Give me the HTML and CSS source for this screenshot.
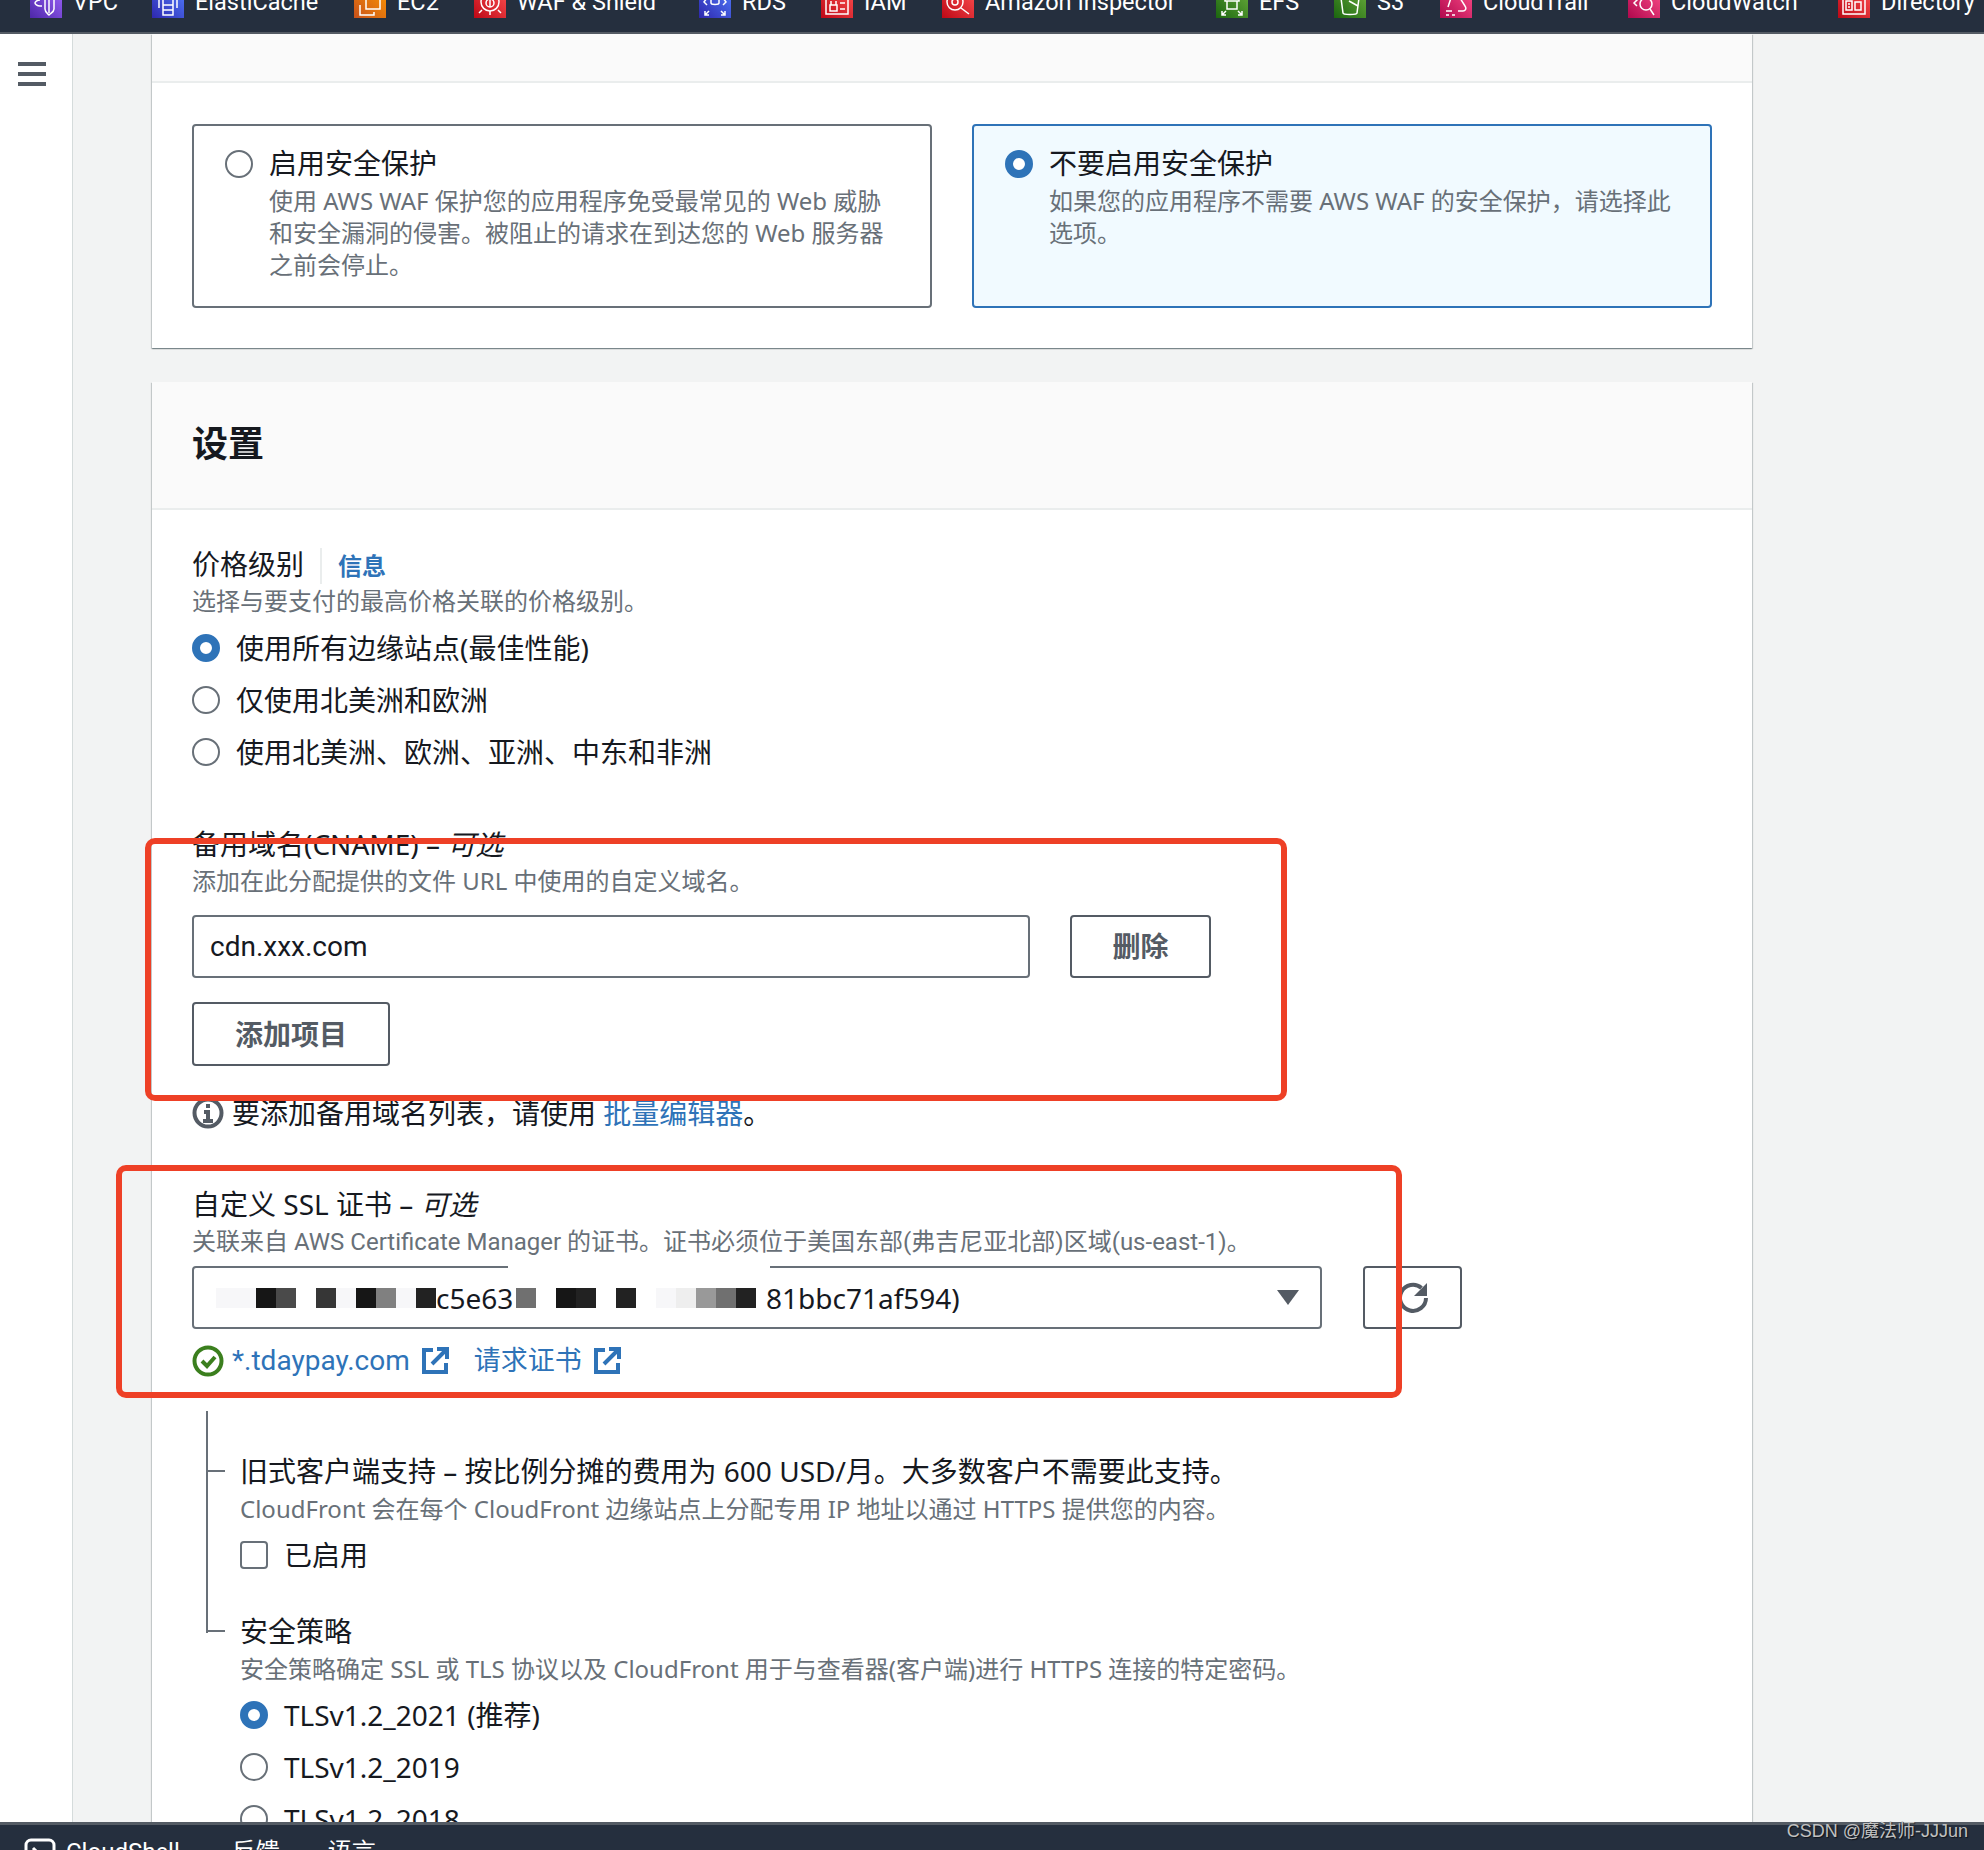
FILE: index.html
```html
<!DOCTYPE html>
<html lang="zh-CN">
<head>
    <meta charset="UTF-8">
    <meta name="viewport" content="width=device-width, initial-scale=1.0">
    <title>CloudFront 创建分配</title>
    <link rel="stylesheet" href="styles.css">
</head>
<body>
    <!-- 顶部服务快捷栏，图标上半部分被页面滚动裁掉 -->
    <nav class="topbar">
        <a class="nav-item"><svg class="nav-icon purple" viewBox="0 -14 32 32"><path d="M10 0C7 0 5 2 5 3s2 3 5 3h2"/><path d="M15-2v11c0 3 2 4 4 6 2-2 5-3 5-6V-2"/><path d="M19-2v15"/></svg>VPC</a>
        <a class="nav-item"><svg class="nav-icon blue" viewBox="0 -14 32 32"><path d="M11-2h10v17H11zM11 5h10M11 10h10M7-2v10M25-2v10"/></svg>ElastiCache</a>
        <a class="nav-item"><svg class="nav-icon orange" viewBox="0 -14 32 32"><path d="M12-2v11h14V-2M6 5v10h14v-3"/></svg>EC2</a>
        <a class="nav-item"><svg class="nav-icon red" viewBox="0 -14 32 32"><circle cx="16" cy="2" r="9"/><circle cx="16" cy="3" r="4"/><path d="M16-2v9M5 13l3-3M27 13l-3-3M16 11v4"/></svg>WAF &amp; Shield</a>
        <a class="nav-item"><svg class="nav-icon blue" viewBox="0 -14 32 32"><path d="M12-2v5c0 2 8 2 8 0v-5M8-2L5 2l3 3M24-2l3 4-3 3M6 15l4-4M6 11v4h4M26 15l-4-4M26 11v4h-4"/></svg>RDS</a>
        <a class="nav-item"><svg class="nav-icon red" viewBox="0 -14 32 32"><path d="M5-2v16h22V-2M9 5h7v6H9zM10 5V1M15 5V1M19 3h5M19 9h5"/></svg>IAM</a>
        <a class="nav-item"><svg class="nav-icon red" viewBox="0 -14 32 32"><circle cx="13" cy="2" r="8"/><circle cx="13" cy="2" r="3"/><path d="M19 8l8 6"/></svg>Amazon Inspector</a>
        <a class="nav-item"><svg class="nav-icon green" viewBox="0 -14 32 32"><path d="M9-2v3h14v-3M11 1v8h10V1M6 15l4-4M6 11v4h4M26 15l-4-4M26 11v4h-4"/></svg>EFS</a>
        <a class="nav-item"><svg class="nav-icon green" viewBox="0 -14 32 32"><path d="M7-2l2 15c0 2 14 2 14 0l2-15M15 1l9 5"/></svg>S3</a>
        <a class="nav-item"><svg class="nav-icon pink" viewBox="0 -14 32 32"><path d="M8 7l3-9M20-2l5 8c2 3 0 5-2 5h-5M6 11h6M6 15h3M12 15h3"/></svg>CloudTrail</a>
        <a class="nav-item"><svg class="nav-icon pink" viewBox="0 -14 32 32"><circle cx="18" cy="4" r="6"/><path d="M22 9l4 6M10-1L6 3l3 3"/></svg>CloudWatch</a>
        <a class="nav-item"><svg class="nav-icon red" viewBox="0 -14 32 32"><path d="M5-2v16h22V-2M8 1h6v9H8zM10 4h2M10 7h2M17 2h6v8h-6z"/></svg>Directory</a>
    </nav>

    <div class="layout">
        <aside class="sidebar">
            <div class="menu-icon"><span></span><span></span><span></span></div>
        </aside>

        <main class="content">
            <section class="card card-waf">
                <div class="card-top"></div>
                <div class="tiles">
                    <label class="tile">
                        <span class="radio"></span>
                        <div>
                            <div class="tile-title">启用安全保护</div>
                            <div class="hint">使用 AWS WAF 保护您的应用程序免受最常见的 Web 威胁和安全漏洞的侵害。被阻止的请求在到达您的 Web 服务器之前会停止。</div>
                        </div>
                    </label>
                    <label class="tile tile-on">
                        <span class="radio radio-on"></span>
                        <div>
                            <div class="tile-title">不要启用安全保护</div>
                            <div class="hint">如果您的应用程序不需要 AWS WAF 的安全保护，请选择此选项。</div>
                        </div>
                    </label>
                </div>
            </section>

            <section class="card card-settings">
                <header class="card-header"><h2>设置</h2></header>
                <div class="card-body">
                    <div class="label">价格级别<a class="info-link">信息</a></div>
                    <div class="hint hint-price">选择与要支付的最高价格关联的价格级别。</div>
                    <div class="radio-group">
                        <div class="radio-row"><span class="radio radio-on"></span>使用所有边缘站点(最佳性能)</div>
                        <div class="radio-row"><span class="radio"></span>仅使用北美洲和欧洲</div>
                        <div class="radio-row"><span class="radio"></span>使用北美洲、欧洲、亚洲、中东和非洲</div>
                    </div>

                    <div class="label label-cname">备用域名(CNAME) – <i>可选</i></div>
                    <div class="hint hint-cname">添加在此分配提供的文件 URL 中使用的自定义域名。</div>
                    <div class="input-row">
                        <div class="input narrow">cdn.xxx.com</div>
                        <button class="button button-delete">删除</button>
                    </div>
                    <button class="button button-add">添加项目</button>
                    <div class="info-line">
                        <svg class="icon-info" viewBox="0 0 32 32"><circle cx="16" cy="16" r="13.5"/><path d="M16 7v4M12 15h4v9M11 24h10"/></svg>
                        <span>要添加备用域名列表，请使用 <a class="link">批量编辑器</a>。</span>
                    </div>

                    <div class="label label-ssl">自定义 SSL 证书 – <i>可选</i></div>
                    <div class="hint hint-gap narrow">关联来自 AWS Certificate Manager 的证书。证书必须位于美国东部(弗吉尼亚北部)区域(us-east-1)。</div>
                    <div class="select-row">
                        <div class="select">
                            <div class="cert">
                                <span class="px s1"></span><span class="px s1"></span><span class="px s9"></span><span class="px s6"></span><span class="px"></span><span class="px s7"></span><span class="px s1"></span><span class="px s9"></span><span class="px s4"></span><span class="px s1"></span><span class="px s8"></span><span class="cert-part">c5e63</span><span class="px s5"></span><span class="px"></span><span class="px s9"></span><span class="px s8"></span><span class="px"></span><span class="px s8"></span><span class="px"></span><span class="px s1"></span><span class="px s2"></span><span class="px s3"></span><span class="px s5"></span><span class="px s8"></span><span class="cert-end">81bbc71af594)</span>
                            </div>
                            <span class="caret"></span>
                        </div>
                        <button class="button button-refresh">
                            <svg viewBox="0 0 36 36"><path d="M31 18a13 13 0 1 1-4.500-10"/><path class="solid" d="M32 3v13H19z"/></svg>
                        </button>
                    </div>
                    <div class="status-row narrow">
                        <svg class="icon-ok" viewBox="0 0 32 32"><circle cx="16" cy="16" r="13.500"/><path d="M10 16l5 5 8-9"/></svg>
                        <a class="link">*.tdaypay.com</a>
                        <svg class="icon-ext" viewBox="0 0 30 30"><path d="M13 4H4v22h22v-9"/><path d="M12 18L26 4M17 3h10v10"/></svg>
                        <a class="link link-request">请求证书</a>
                        <svg class="icon-ext" viewBox="0 0 30 30"><path d="M13 4H4v22h22v-9"/><path d="M12 18L26 4M17 3h10v10"/></svg>
                    </div>

                    <div class="tree">
                        <div class="tree-item">
                            <div class="label">旧式客户端支持 – 按比例分摊的费用为 600 USD/月。大多数客户不需要此支持。</div>
                            <div class="hint hint-gap">CloudFront 会在每个 CloudFront 边缘站点上分配专用 IP 地址以通过 HTTPS 提供您的内容。</div>
                            <div class="check-row"><span class="checkbox"></span>已启用</div>
                        </div>
                        <div class="tree-item tree-policy">
                            <div class="label">安全策略</div>
                            <div class="hint hint-gap">安全策略确定 SSL 或 TLS 协议以及 CloudFront 用于与查看器(客户端)进行 HTTPS 连接的特定密码。</div>
                            <div class="radio-group radio-group-tight">
                                <div class="radio-row"><span class="radio radio-on"></span>TLSv1.2_2021 (推荐)</div>
                                <div class="radio-row"><span class="radio"></span>TLSv1.2_2019</div>
                                <div class="radio-row"><span class="radio"></span>TLSv1.2_2018</div>
                            </div>
                        </div>
                    </div>
                </div>
            </section>
        </main>
    </div>

    <footer class="bottombar">
        <svg class="shell-icon" viewBox="0 0 32 32"><rect x="2" y="2" width="28" height="28" rx="5"/><path d="M9 10l6 6-6 6"/></svg>
        <span class="foot-shell">CloudShell</span>
        <span class="foot-item">反馈</span>
        <span class="foot-item">语言</span>
    </footer>

    <!-- 截图上的红框和水印 -->
    <div class="mark mark-cname"></div>
    <div class="mark mark-ssl"></div>
    <div class="watermark">CSDN @魔法师-JJJun</div>
</body>
</html>
```

FILE: styles.css
```css
* {
    box-sizing: border-box;
}
html, body {
    margin: 0;
    height: 1850px;
    overflow: hidden;
}
body {
    position: relative;
    display: flex;
    flex-direction: column;
    background-color: #f2f3f3;
    color: #16191f;
    font-family: "Noto Sans", "Noto Sans CJK SC", sans-serif;
    font-size: 28px;
    line-height: 36px;
}
a {
    text-decoration: none;
}
.narrow {
    font-family: Roboto, "Noto Sans CJK SC", sans-serif;
}

/* top bar */
.topbar {
    flex: none;
    height: 34px;
    display: grid;
    grid-template-columns: 122px 202px 120px 225px 122px 121px 274px 118px 106px 188px 210px 1fr;
    padding-left: 30px;
    background-color: #252f3e;
    border-bottom: 2px solid #545b64;
    font-family: Roboto, sans-serif;
    overflow: hidden;
    white-space: nowrap;
}
.nav-item {
    display: flex;
    align-items: flex-start;
    gap: 11px;
    height: 32px;
    margin-top: -14px;
    color: #fff;
    font-size: 23.500px;
    line-height: 32px;
}
.nav-icon {
    flex: none;
    width: 32px;
    height: 32px;
    fill: none;
    stroke: #fff;
    stroke-width: 1.500;
}
.purple { background: linear-gradient(45deg, #4d27a8, #a166ff); }
.blue { background: linear-gradient(45deg, #2e27ad, #527fff); }
.orange { background: linear-gradient(45deg, #c8511b, #ff9900); }
.red { background: linear-gradient(45deg, #bd0816, #ff5252); }
.green { background: linear-gradient(45deg, #1b660f, #6cae3e); }
.pink { background: linear-gradient(45deg, #b0084d, #ff4f8b); }

/* page layout */
.layout {
    flex: 1;
    min-height: 0;
    display: flex;
    overflow: hidden;
}
.sidebar {
    flex: none;
    width: 73px;
    padding: 28px 0 0 18px;
    background-color: #fff;
    border-right: 1px solid #d5dbdb;
}
.menu-icon {
    display: flex;
    flex-direction: column;
    gap: 6px;
    width: 28px;
}
.menu-icon span {
    height: 4px;
    background-color: #545b64;
}
.content {
    flex: none;
    width: 1600px;
    margin-left: 79px;
}

/* cards */
.card {
    background-color: #fff;
    box-shadow: 0 1px 1px 0 rgba(0, 28, 36, 0.3), 1px 1px 1px 0 rgba(0, 28, 36, 0.15), -1px 1px 1px 0 rgba(0, 28, 36, 0.15);
}
.card-top {
    height: 49px;
    background-color: #fafafa;
    border-bottom: 2px solid #eaeded;
}
.tiles {
    display: grid;
    grid-template-columns: 1fr 1fr;
    gap: 40px;
    padding: 41px 40px 40px;
}
.tile {
    display: flex;
    gap: 16px;
    height: 184px;
    padding: 19px 31px 0;
    border: 2px solid #687078;
    border-radius: 4px;
}
.tile-on {
    background-color: #f1faff;
    border-color: #2e73b8;
}
.tile .radio {
    margin-top: 5px;
}
.tile-title {
    margin-bottom: 4px;
}
.card-settings {
    margin-top: 34px;
}
.card-header {
    height: 128px;
    padding: 40px 40px 0;
    background-color: #fafafa;
    border-bottom: 2px solid #eaeded;
}
.card-header h2 {
    margin: 0;
    font-size: 36px;
    line-height: 44px;
    font-weight: 700;
}
.card-body {
    padding: 36px 40px 0;
}

/* form text */
.label i {
    font-style: italic;
}
.hint {
    color: #687078;
    font-size: 24px;
    line-height: 32px;
}
.hint-gap {
    margin-top: 4px;
}
.hint-price {
    margin-top: 1px;
}
.info-link {
    display: inline-block;
    margin-left: 16px;
    padding-left: 16px;
    border-left: 2px solid #eaeded;
    color: #2e73b8;
    font-size: 24px;
    font-weight: 700;
}
.link {
    color: #2e73b8;
}
.radio-group {
    margin-top: 5px;
}
.radio-group-tight {
    margin-top: 4px;
}
.radio-row {
    display: flex;
    align-items: center;
    gap: 16px;
    height: 52px;
}
.radio {
    flex: none;
    display: block;
    width: 28px;
    height: 28px;
    background-color: #fff;
    border: 2px solid #687078;
    border-radius: 50%;
}
.radio-on {
    border: 8px solid #2e73b8;
}
.label-cname {
    margin-top: 48px;
}
.hint-cname {
    margin-top: 3px;
}
.input-row {
    display: flex;
    gap: 40px;
    margin-top: 18px;
}
.input {
    width: 838px;
    height: 63px;
    padding: 12px 16px;
    border: 2px solid #687078;
    border-radius: 4px;
}
.button {
    padding: 0 0 3px;
    background-color: #fff;
    border: 2px solid #545b64;
    border-radius: 4px;
    color: #545b64;
    cursor: pointer;
    font-family: inherit;
    font-size: 28px;
    font-weight: 700;
}
.button-delete {
    width: 141px;
    height: 63px;
}
.button-add {
    display: block;
    width: 198px;
    height: 64px;
    margin-top: 24px;
}
.info-line {
    display: flex;
    align-items: center;
    gap: 8px;
    margin-top: 29px;
}
.icon-info {
    flex: none;
    width: 32px;
    height: 32px;
    fill: none;
    stroke: #545b64;
    stroke-width: 4;
}
.label-ssl {
    margin-top: 55px;
}
.select-row {
    display: flex;
    gap: 41px;
    margin-top: 8px;
}
.select {
    position: relative;
    display: flex;
    align-items: center;
    justify-content: space-between;
    width: 1130px;
    height: 63px;
    padding-right: 21px;
    border: 2px solid #687078;
    border-radius: 4px;
}
/* 打码时盖掉的边框 */
.select::after {
    content: "";
    position: absolute;
    top: -2px;
    left: 314px;
    width: 262px;
    height: 2px;
    background-color: #fff;
}
.cert {
    display: flex;
    align-items: center;
    padding-left: 22px;
}
.px {
    flex: none;
    width: 20px;
    height: 20px;
}
.s1 { background-color: #f7f7f9; }
.s2 { background-color: #eeeeee; }
.s3 { background-color: #999999; }
.s4 { background-color: #808080; }
.s5 { background-color: #707070; }
.s6 { background-color: #4a4a4a; }
.s7 { background-color: #363636; }
.s8 { background-color: #222222; }
.s9 { background-color: #161616; }
.cert-part {
    width: 80px;
}
.cert-end {
    margin-left: 10px;
}
.caret {
    width: 0;
    height: 0;
    border-left: 11px solid transparent;
    border-right: 11px solid transparent;
    border-top: 15px solid #545b64;
}
.button-refresh {
    display: flex;
    align-items: center;
    justify-content: center;
    width: 99px;
    height: 63px;
    padding: 0;
}
.button-refresh svg {
    width: 36px;
    height: 36px;
    fill: none;
    stroke: #545b64;
    stroke-width: 4;
}
.button-refresh .solid {
    fill: #545b64;
    stroke: none;
}
.status-row {
    display: flex;
    align-items: center;
    margin-top: 14px;
}
.icon-ok {
    flex: none;
    width: 32px;
    height: 32px;
    margin-right: 8px;
    fill: none;
    stroke: #3b7f1e;
    stroke-width: 4;
}
.icon-ext {
    flex: none;
    width: 30px;
    height: 30px;
    margin-left: 10px;
    fill: none;
    stroke: #2e73b8;
    stroke-width: 4;
}
.link-request {
    margin-left: 24px;
    font-size: 27px;
}

/* 旧式客户端 / 安全策略 */
.tree {
    position: relative;
    margin-top: 32px;
    padding: 42px 0 0 48px;
}
.tree::before {
    content: "";
    position: absolute;
    top: 0;
    left: 14px;
    width: 2px;
    height: 222px;
    background-color: #687078;
}
.tree-item {
    position: relative;
}
.tree-item::before {
    content: "";
    position: absolute;
    top: 17px;
    left: -34px;
    width: 19px;
    height: 2px;
    background-color: #687078;
}
.check-row {
    display: flex;
    align-items: center;
    gap: 16px;
    height: 40px;
    margin-top: 10px;
}
.checkbox {
    flex: none;
    width: 28px;
    height: 28px;
    border: 2px solid #687078;
    border-radius: 4px;
}
.tree-policy {
    margin-top: 38px;
}

/* bottom bar */
.bottombar {
    flex: none;
    display: flex;
    height: 28px;
    padding: 9px 0 0 24px;
    background-color: #252f3e;
    border-top: 3px solid #545b64;
    color: #fff;
    font-family: Roboto, "Noto Sans CJK SC", sans-serif;
    overflow: hidden;
    white-space: nowrap;
}
.shell-icon {
    flex: none;
    width: 32px;
    height: 32px;
    margin-top: 4px;
    fill: none;
    stroke: #fff;
    stroke-width: 3;
}
.foot-shell {
    margin: 0 4px 0 10px;
    font-size: 24px;
}
.foot-item {
    margin-left: 48px;
    font-size: 24px;
}

/* overlay */
.mark {
    position: absolute;
    border: 6px solid #ee4026;
    border-radius: 10px;
}
.mark-cname {
    top: 838px;
    left: 145px;
    width: 1142px;
    height: 263px;
}
.mark-ssl {
    top: 1165px;
    left: 116px;
    width: 1286px;
    height: 233px;
}
.watermark {
    position: absolute;
    top: 1820px;
    right: 16px;
    color: #c0c0c0;
    font-family: "Liberation Sans", "Noto Sans CJK SC", sans-serif;
    font-size: 18px;
    line-height: 22px;
    text-shadow: 1px 1px 1px rgba(0, 0, 0, 0.6);
}
```
